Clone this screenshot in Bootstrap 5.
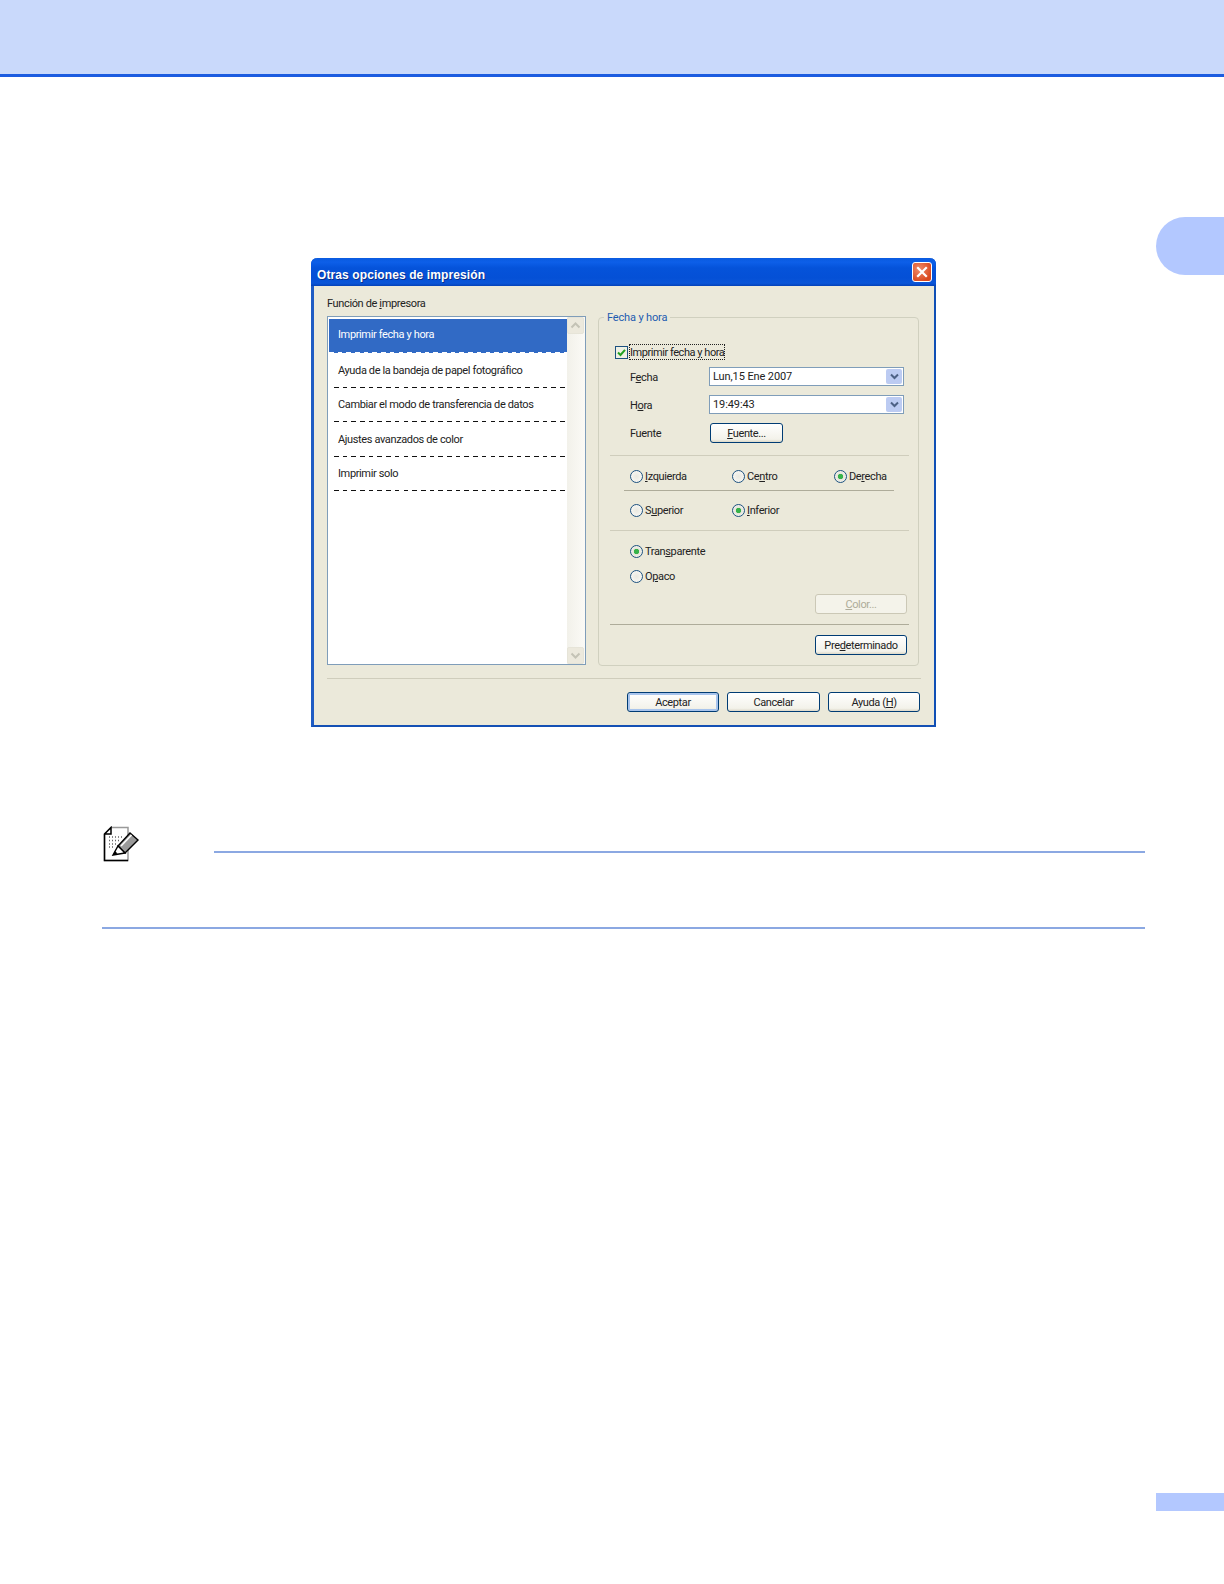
<!DOCTYPE html>
<html lang="es"><head><meta charset="utf-8"><title>Otras opciones de impresión</title>
<link rel="stylesheet" href="https://cdn.jsdelivr.net/npm/bootstrap@5.3.0/dist/css/bootstrap.min.css">
<style>
html,body{margin:0;background:#fff;}
body{width:1224px;height:1584px;overflow:hidden;font-family:Roboto,"Liberation Sans",Arial,sans-serif;font-size:11px;line-height:14px;color:#222;letter-spacing:-.37px;}
.pg-head{height:77px;background:#c9d9fb;border-bottom:3px solid #1c5ce0;}
.pg-main{width:1156px;}
.pg-side{width:68px;}
.side-tab{height:58px;margin-top:140px;background:#b3c8ff;border-radius:29px 0 0 29px;}
.side-foot{height:18px;margin-top:1218px;background:#b3c8ff;}
.xp-win{width:625px;height:469px;margin:181px 0 0 311px;border:3px solid #1f5cc4;border-top:0;border-right:2px solid #0f4fb5;border-bottom:2px solid #1450b4;border-radius:6px 6px 0 0;background:#ebe9da;}
.xp-title{height:28px;margin:0 -2px 0 -3px;padding:0 4px 0 6px;border-radius:6px 6px 0 0;background:linear-gradient(#0a5be0 0,#0d5fe8 15%,#0553da 35%,#0450d6 70%,#0a55d8 90%,#0442b8 100%);}
.xp-title span{font:bold 12px "Liberation Sans",sans-serif;color:#fff;text-shadow:1px 1px 0 #0a2f8a;letter-spacing:.1px;padding-top:5px;}
.xp-close{width:20px;height:20px;border:1px solid #fff;border-radius:3px;background:radial-gradient(circle at 35% 35%,#ef8b6b,#d9491f 75%);}
.xp-body{padding:11px 13px 0 13px;}
.lb-cap{height:14px;margin-bottom:5px;}
.lb-box{width:259px;height:349px;border:1px solid #7f9db9;background:#fff;}
.lb-list{width:239px;padding:2px 0 0 1px;}
.lb-list .list-group-item{height:34.4px;padding:1px 0 0 9px;border:0;border-radius:0;background:transparent;color:#222;font-size:11px;display:flex;align-items:center;position:relative;background-image:repeating-linear-gradient(90deg,#111 0 4.6px,transparent 4.6px 8.7px);background-size:234px 1px;background-position:5px bottom;background-repeat:no-repeat;}
.lb-list .list-group-item.active{padding:0 0 2px 9px;background-color:#316ac5;color:#fff;background-image:repeating-linear-gradient(90deg,#fff 0 4.6px,transparent 4.6px 8.7px);background-size:100% 1px;background-position:0 bottom;}
.lb-scroll{width:18px;background:linear-gradient(90deg,#f2f1ea,#fbfaf6);}
.sb-btn{width:17px;height:17px;border:1px solid #e6e4d8;border-radius:2px;background:#ece9dd;}
.gr-box{width:321px;height:357px;margin:-7px 0 0 12px;padding:0 9px 0 11px;border:1px solid #d0d0bf;border-radius:4px;min-width:0;}
.gr-box legend{float:none;width:auto;margin:0 0 0 -6px;padding:2px 3px 0;font-size:11px;line-height:14px;color:#1d5bb0;letter-spacing:-.15px;}
.rw{display:flex;align-items:center;height:14px;}
.lab-w{width:99px;padding-left:20px;margin-top:2px;}
.lab-x{width:100px;padding-left:20px;margin-top:2px;}
.ck{width:13px;height:13px;border:1px solid #1c5180;background:#eef0e4;margin-left:5px;margin-right:2px;flex:none;}
.focus-lab{outline:1px dotted #222;padding:1px 0 0 0;width:94px;height:14px;white-space:nowrap;line-height:13px;letter-spacing:-.45px;}
.xp-sel{width:195px;height:19px;border:1px solid #7f9db9;background:#fff;padding:0 1px 0 3px;letter-spacing:-.1px;}
.xp-arrow{width:16px;height:15px;border-radius:2px;background:#bccbf2;}
.sep1{height:1px;background:#cfcdbc;}
.sep2{height:1px;background:#aeac9a;}
.sep-in{margin-left:14px;margin-right:15px;}
.rad{appearance:none;-webkit-appearance:none;width:13px;height:13px;border:1px solid #1c5180;border-radius:50%;background:radial-gradient(circle,#e9e8e0,#fbfbf8);margin:0 3px 0 0;flex:none;display:block;}
.rad:checked{background:radial-gradient(circle,#37b24a 0 2.4px,#e6e5da 3px,#fbfbf8 100%);}
.rad-cell{width:102px;flex:none;display:flex;align-items:center;}
.rad-cell span{margin-top:2px;margin-left:-1px;}
.rad-line{padding-left:20px;}
.btn.xp-btn{--bs-btn-font-size:11px;--bs-btn-padding-x:0;--bs-btn-padding-y:0;height:20px;line-height:17px;border:1px solid #003c74;border-radius:3px;background:linear-gradient(#fff,#f3f2ea 85%,#dcd8c8);color:#222;font-size:11px;padding:0;letter-spacing:-.37px;}
.btn.xp-btn.is-def{box-shadow:inset 0 0 0 2px #a8c4ec;}
.btn.xp-btn:disabled{opacity:1;border-color:#cbc8b6;background:#f4f3ea;color:#aeac99;}
.w-73{width:73px}.w-92{width:92px}.w-93{width:93px}
.pe-tiny{padding-right:2px;}
.foot-btns{gap:8px;margin-right:1px;}
.note-wrap{width:1043px;margin:98px 0 0 102px;}
.note-ic{width:37px;height:36px;display:block;margin:1px 0 0 1px;}
.note-line{height:2px;background:#8ba8e2;}
.note-top{margin:26px 0 0 74px;flex:1;}
.note-bot{margin-top:65px;}
.h-19{height:19px}
.m7{margin-top:7px}.m8{margin-top:8px}.m9{margin-top:9px}.m10{margin-top:10px}.m11{margin-top:11px}.m12{margin-top:12px}.m13{margin-top:13px}.m20{margin-top:20px}
</style></head>
<body>
<div class="pg-head"></div>
<div class="d-flex">
 <div class="pg-main">
  <div class="xp-win">
   <div class="xp-title d-flex align-items-center justify-content-between">
    <span>Otras opciones de impresión</span>
    <div class="xp-close d-flex align-items-center justify-content-center">
     <svg width="14" height="14" viewBox="0 0 14 14"><path d="M3 3 11 11M11 3 3 11" stroke="#fff" stroke-width="2.2" stroke-linecap="square"/></svg>
    </div>
   </div>
   <div class="xp-body">
    <div class="lb-cap">Función de <u>i</u>mpresora</div>
    <div class="d-flex">
     <div class="lb-box d-flex justify-content-between flex-none">
      <div class="list-group lb-list">
       <div class="list-group-item active">Imprimir fecha y hora</div>
       <div class="list-group-item">Ayuda de la bandeja de papel fotográfico</div>
       <div class="list-group-item">Cambiar el modo de transferencia de datos</div>
       <div class="list-group-item">Ajustes avanzados de color</div>
       <div class="list-group-item">Imprimir solo</div>
      </div>
      <div class="lb-scroll d-flex flex-column justify-content-between py-0">
       <div class="sb-btn d-flex align-items-center justify-content-center"><svg width="11" height="7" viewBox="0 0 11 7"><path d="M1.5 5.5 5.5 1.5 9.5 5.5" fill="none" stroke="#c4c3b6" stroke-width="2"/></svg></div>
       <div class="sb-btn d-flex align-items-center justify-content-center"><svg width="11" height="7" viewBox="0 0 11 7"><path d="M1.5 1.5 5.5 5.5 9.5 1.5" fill="none" stroke="#c4c3b6" stroke-width="2"/></svg></div>
      </div>
     </div>
     <fieldset class="gr-box">
      <legend>Fecha y hora</legend>
      <div class="rw m20" >
       <span class="ck d-flex align-items-center justify-content-center"><svg width="11" height="11" viewBox="0 0 11 11"><path d="M2 5.500 4.500 8 9 2.800" fill="none" stroke="#21a121" stroke-width="2"/></svg></span>
       <span class="focus-lab">Imprimir fecha <u>y</u> hora</span>
      </div>
      <div class="d-flex align-items-center m8 h-19">
       <span class="lab-w">F<u>e</u>cha</span>
       <div class="xp-sel d-flex align-items-center justify-content-between"><span>Lun,15 Ene 2007</span>
        <span class="xp-arrow d-flex align-items-center justify-content-center"><svg width="9" height="7" viewBox="0 0 9 7"><path d="M1 1.500 4.500 5 8 1.500" fill="none" stroke="#4d6185" stroke-width="2"/></svg></span></div>
      </div>
      <div class="d-flex align-items-center m9 h-19">
       <span class="lab-w">H<u>o</u>ra</span>
       <div class="xp-sel d-flex align-items-center justify-content-between"><span>19:49:43</span>
        <span class="xp-arrow d-flex align-items-center justify-content-center"><svg width="9" height="7" viewBox="0 0 9 7"><path d="M1 1.500 4.500 5 8 1.500" fill="none" stroke="#4d6185" stroke-width="2"/></svg></span></div>
      </div>
      <div class="d-flex align-items-center m9">
       <span class="lab-x">Fuente</span>
       <button type="button" class="btn xp-btn w-73"><u>F</u>uente...</button>
      </div>
      <div class="sep1 m12"></div>
      <div class="rw rad-line m13">
       <label class="rad-cell"><input class="rad" type="radio" name="a"><span><u>I</u>zquierda</span></label>
       <label class="rad-cell"><input class="rad" type="radio" name="a"><span>Ce<u>n</u>tro</span></label>
       <label class="rad-cell"><input class="rad" type="radio" name="a" checked><span>De<u>r</u>echa</span></label>
      </div>
      <div class="sep2 m7 sep-in"></div>
      <div class="rw rad-line m12">
       <label class="rad-cell"><input class="rad" type="radio" name="b"><span>S<u>u</u>perior</span></label>
       <label class="rad-cell"><input class="rad" type="radio" name="b" checked><span><u>I</u>nferior</span></label>
      </div>
      <div class="sep1 m13"></div>
      <div class="rw rad-line m13"><label class="rad-cell"><input class="rad" type="radio" name="c" checked><span>Tran<u>s</u>parente</span></label></div>
      <div class="rw rad-line m11"><label class="rad-cell"><input class="rad" type="radio" name="c"><span>O<u>p</u>aco</span></label></div>
      <div class="d-flex justify-content-end m11 pe-tiny"><button type="button" class="btn xp-btn w-92" disabled><u>C</u>olor...</button></div>
      <div class="sep2 m10"></div>
      <div class="d-flex justify-content-end m10 pe-tiny"><button type="button" class="btn xp-btn w-92">Pre<u>d</u>eterminado</button></div>
     </fieldset>
    </div>
    <div class="sep1 m12"></div>
    <div class="d-flex justify-content-end m13 foot-btns">
     <button type="button" class="btn xp-btn is-def w-92">Aceptar</button>
     <button type="button" class="btn xp-btn w-93">Cancelar</button>
     <button type="button" class="btn xp-btn w-92">Ayuda (<u>H</u>)</button>
    </div>
   </div>
  </div>
  <div class="note-wrap">
   <div class="d-flex">
    <svg class="note-ic" viewBox="0 0 37 36">
     <path d="M8 1.500H25V34.500H1.500V8Z" fill="#fff" stroke="#999" stroke-width="1.500"/>
     <path d="M25 34.500H1.500V8L8 1.500V8H1.500" fill="none" stroke="#000" stroke-width="1.500"/>
     <path d="M6 11h1M9 11h1M12 11h1M15 11h1M18 11h1M6 14.500h1M9 14.500h1M12 14.500h1M15 14.500h1M6 18h1M9 18h1M12 18h1M6 21h1M9 21h1" stroke="#666" stroke-width="1.600"/>
     <path d="M15 20 27 7 35 14 22 27Z" fill="#999" stroke="#000" stroke-width="1.400"/>
     <path d="M18 20 28.500 9" stroke="#fff" stroke-width="1.600"/>
     <path d="M15 20 22 27 10 29Z" fill="#fff" stroke="#000" stroke-width="1.400"/>
     <path d="M10 29 12 25 14.500 27.500Z" fill="#000"/>
    </svg>
    <div class="note-line note-top"></div>
   </div>
   <div class="note-line note-bot"></div>
  </div>
 </div>
 <div class="pg-side">
  <div class="side-tab"></div>
  <div class="side-foot"></div>
 </div>
</div>
</body></html>
